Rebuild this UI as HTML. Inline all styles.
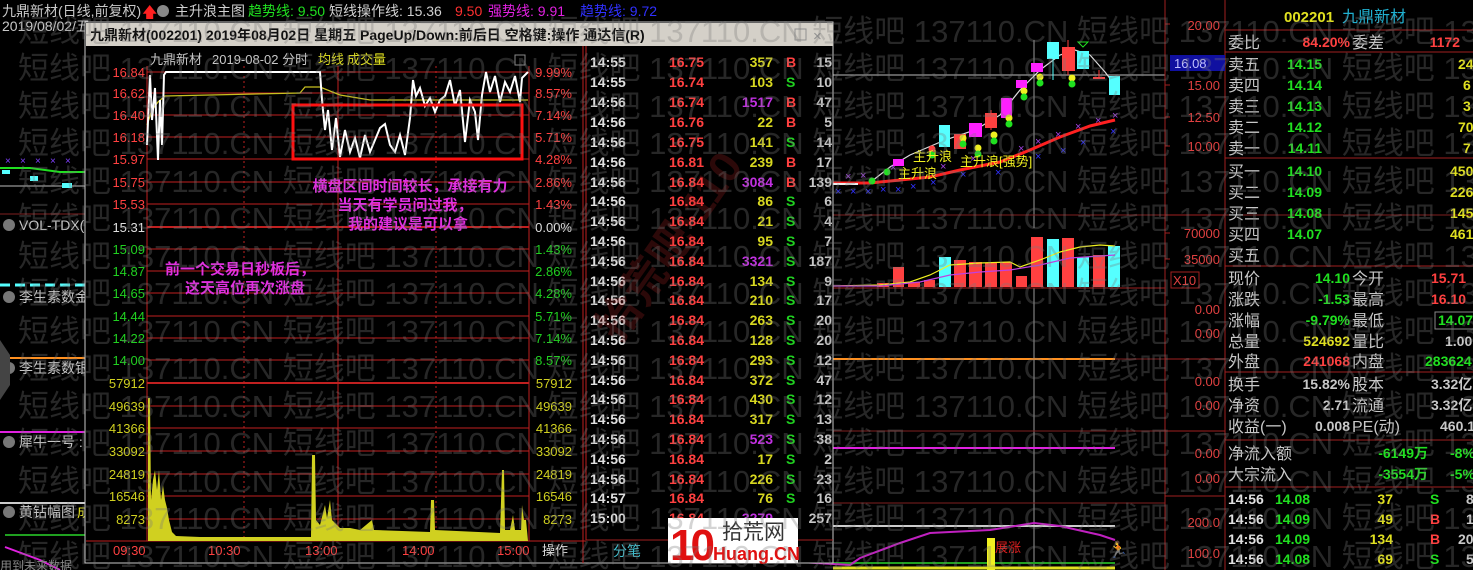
<!DOCTYPE html>
<html><head><meta charset="utf-8"><style>
html,body{margin:0;padding:0;background:#000;width:1473px;height:570px;overflow:hidden}
svg{display:block}
text{font-family:"Liberation Sans","Noto Sans CJK SC",sans-serif}
.t{font-size:14px;font-weight:bold}
.wm{font-size:31px;fill:rgba(120,120,120,0.32)}
</style></head><body>
<svg width="1473" height="570" viewBox="0 0 1473 570" xmlns="http://www.w3.org/2000/svg">
<rect width="1473" height="570" fill="#000"/>

<g font-size="14">
<text x="2" y="16" fill="#c8c8c8">九鼎新材(日线,前复权)</text>
<text x="142" y="17" fill="#ff2020" font-size="15">🡅</text>
<circle cx="163" cy="11" r="6" fill="#888"/>
<text x="175" y="16" fill="#d0d0d0">主升浪主图</text>
<text x="248" y="16" fill="#20e020">趋势线: 9.50</text>
<text x="329" y="16" fill="#d0d0d0">短线操作线: 15.36</text>
<text x="455" y="16" fill="#ff3030">9.50</text>
<text x="488" y="16" fill="#e020e0">强势线: 9.91</text>
<text x="580" y="16" fill="#3030ff">趋势线: 9.72</text>
<text x="2" y="31" fill="#c8c8c8">2019/08/02/五</text>
</g>

<line x1="0" y1="186" x2="85" y2="186" fill="none" stroke="#bbb" stroke-width="1"/>
<polyline points="0,168 30,168 60,172 85,172" fill="none" stroke="#20e020" stroke-width="2"/>
<g fill="#8040ff" font-size="10"><text x="5" y="164">×</text><text x="20" y="164">×</text><text x="35" y="164">×</text><text x="50" y="164">×</text><text x="65" y="164">×</text></g>
<rect x="2" y="170" width="8" height="4" fill="#5ff"/><rect x="30" y="176" width="8" height="5" fill="#5ff"/><rect x="62" y="183" width="10" height="5" fill="#5ff"/>
<line x1="0" y1="214" x2="85" y2="214" stroke="#802020"/>
<line x1="0" y1="285" x2="85" y2="285" stroke="#5ff" stroke-width="3" stroke-dasharray="10,5"/>
<line x1="0" y1="358" x2="85" y2="358" stroke="#ff9020" stroke-width="2"/>
<line x1="0" y1="432" x2="85" y2="432" stroke="#e020e0" stroke-width="2"/>
<line x1="0" y1="503" x2="85" y2="503" stroke="#ccc" stroke-width="2"/>
<line x1="5" y1="535" x2="85" y2="535" stroke="#20a020" stroke-width="2"/>
<polyline points="5,547 40,560 60,570" fill="none" stroke="#e020e0" stroke-width="2"/>
<g font-size="14" fill="#c8c8c8">
<circle cx="9" cy="225" r="6" fill="#777"/><text x="19" y="230">VOL-TDX(5</text>
<circle cx="9" cy="297" r="6" fill="#777"/><text x="19" y="302">李生素数金</text>
<circle cx="9" cy="368" r="6" fill="#777"/><text x="19" y="373">李生素数银</text>
<circle cx="9" cy="442" r="6" fill="#777"/><text x="19" y="447">犀牛一号 :</text>
<circle cx="9" cy="512" r="6" fill="#777"/><text x="19" y="517">黄钻幅图</text><text x="77" y="517" fill="#e0e020">成</text>
<text x="0" y="570" fill="#888" font-size="12">用到未来数据</text>
</g>
<polygon points="0,340 10,355 10,385 0,400" fill="#444"/>

<line x1="833" y1="75" x2="1165" y2="75" stroke="#bbb"/>
<line x1="1034" y1="40" x2="1034" y2="228" stroke="#999"/>
<line x1="1034" y1="288" x2="1034" y2="570" stroke="#999"/>
<line x1="833" y1="215" x2="1473" y2="215" stroke="#802020"/>
<line x1="833" y1="288" x2="1165" y2="288" stroke="#a02020"/>
<line x1="833" y1="359" x2="1115" y2="359" stroke="#ff9020" stroke-width="2"/>
<line x1="1115" y1="359" x2="1165" y2="359" stroke="#802020"/>
<line x1="833" y1="431" x2="1165" y2="431" stroke="#802020"/>
<line x1="833" y1="448" x2="1115" y2="448" stroke="#e020e0" stroke-width="2"/>
<line x1="833" y1="526" x2="1115" y2="526" stroke="#ccc" stroke-width="2"/>
<line x1="833" y1="503" x2="1165" y2="503" stroke="#802020"/>
<line x1="833" y1="563" x2="1115" y2="563" stroke="#20a020" stroke-width="2"/>
<polyline points="800,562 850,565 860,558 900,543 930,533 990,530 1034,523 1060,526 1100,535 1115,540" fill="none" stroke="#c020c0" stroke-width="2"/>
<rect x="987" y="538" width="8" height="32" fill="#f0f020"/>
<text x="995" y="552" fill="#e02020" font-size="13">展涨</text>
<text x="1108" y="555" fill="#ffa020" font-size="16">&#x1F3C3;</text>
<line x1="833" y1="568" x2="1115" y2="568" stroke="#e0e020" stroke-width="3"/>

<polyline points="833,183 870,183 900,180 930,177 960,170 1000,162 1030,150 1060,137 1090,126 1115,120" fill="none" stroke="#ff2020" stroke-width="3"/>
<line x1="833" y1="184" x2="858" y2="184" stroke="#eee" stroke-width="2"/>
<polyline points="872,181 890,167 910,155 945,140 975,130 1000,115 1020,90 1040,70 1060,55 1075,50 1090,55 1105,72 1115,85" fill="none" stroke="#ddd" stroke-width="1.2"/>
<g font-size="11" fill="#a040e0">
<text x="845" y="180">×</text><text x="860" y="179">×</text><text x="890" y="171">×</text><text x="940" y="170">×</text><text x="970" y="162">×</text><text x="1018" y="152">×</text><text x="1035" y="145">×</text><text x="1055" y="138">×</text><text x="1075" y="130">×</text><text x="1095" y="124">×</text><text x="1112" y="119">×</text>
</g>
<g font-size="11" fill="#3030ff">
<text x="835" y="195">×</text><text x="850" y="195">×</text><text x="865" y="195">×</text><text x="880" y="193">×</text><text x="895" y="193">×</text><text x="910" y="190">×</text><text x="930" y="186">×</text><text x="960" y="178">×</text><text x="995" y="176">×</text><text x="1035" y="160">×</text><text x="1060" y="154">×</text><text x="1080" y="146">×</text><text x="1110" y="135">×</text>
</g>
<g>
<rect x="893" y="159" width="11" height="7" fill="#ff20ff"/>
<rect x="939" y="125" width="11" height="22" fill="#55ffff"/>
<rect x="954" y="134" width="12" height="15" fill="#ff4040"/>
<rect x="969" y="123" width="13" height="14" fill="#ff20ff"/>
<line x1="991" y1="110" x2="991" y2="130" stroke="#ff4040"/><rect x="985" y="113" width="12" height="15" fill="#ff4040"/>
<rect x="1001" y="98" width="11" height="20" fill="#ff20ff"/>
<rect x="1016" y="80" width="11" height="8" fill="#ff20ff"/>
<rect x="1031" y="63" width="12" height="9" fill="#ff20ff"/>
<line x1="1053" y1="42" x2="1053" y2="80" stroke="#55ffff"/><rect x="1047" y="42" width="12" height="17" fill="#55ffff"/>
<line x1="1068" y1="40" x2="1068" y2="75" stroke="#ff4040"/><rect x="1062" y="47" width="13" height="24" fill="#ff4040"/>
<rect x="1077" y="51" width="12" height="18" fill="#55ffff"/>
<polygon points="1078,42 1088,42 1083,47" fill="none" stroke="#20e020"/>
<line x1="1099" y1="70" x2="1099" y2="78" stroke="#ff4040"/><rect x="1093" y="77" width="12" height="2" fill="#ff4040"/>
<rect x="1109" y="76" width="11" height="19" fill="#55ffff"/>
</g>
<g>
<circle cx="872" cy="181" r="3.5" fill="#20e020"/><circle cx="887" cy="172" r="3.5" fill="#20e020"/>
<circle cx="932" cy="149" r="3.5" fill="#ff4040"/><circle cx="932" cy="155" r="3.5" fill="#20e020"/>
<circle cx="963" cy="138" r="3.5" fill="#f0f020"/><circle cx="963" cy="144" r="3.5" fill="#20e020"/>
<circle cx="978" cy="148" r="3.5" fill="#f0f020"/><circle cx="978" cy="154" r="3.5" fill="#20e020"/>
<circle cx="994" cy="135" r="3.5" fill="#f0f020"/><circle cx="994" cy="141" r="3.5" fill="#20e020"/>
<circle cx="1009" cy="118" r="3.5" fill="#f0f020"/><circle cx="1009" cy="124" r="3.5" fill="#20e020"/>
<circle cx="1024" cy="91" r="3.5" fill="#f0f020"/><circle cx="1024" cy="97" r="3.5" fill="#20e020"/>
<circle cx="1040" cy="77" r="3.5" fill="#f0f020"/><circle cx="1040" cy="83" r="3.5" fill="#20e020"/>
<circle cx="1072" cy="78" r="3.5" fill="#f0f020"/><circle cx="1072" cy="84" r="3.5" fill="#20e020"/>
</g>
<g font-size="13" fill="#f0f020">
<text x="913" y="161">主升浪</text><text x="898" y="178">主升浪</text><text x="960" y="166">主升浪[强势]</text>
</g>
<g>
<rect x="877" y="283" width="12" height="4" fill="#ff4040"/>
<rect x="893" y="267" width="11" height="20" fill="#ff4040"/>
<rect x="908" y="282" width="12" height="5" fill="#ff4040"/>
<rect x="924" y="280" width="11" height="7" fill="#ff4040"/>
<rect x="939" y="257" width="12" height="30" fill="#55ffff"/>
<rect x="954" y="260" width="12" height="27" fill="#ff4040"/>
<rect x="969" y="262" width="13" height="25" fill="#ff4040"/>
<rect x="985" y="263" width="12" height="24" fill="#ff4040"/>
<rect x="1000" y="262" width="12" height="25" fill="#ff4040"/>
<rect x="1016" y="276" width="11" height="11" fill="#ff4040"/>
<rect x="1031" y="237" width="12" height="50" fill="#ff4040"/>
<rect x="1047" y="239" width="12" height="48" fill="#55ffff"/>
<rect x="1062" y="238" width="12" height="49" fill="#ff4040"/>
<rect x="1077" y="257" width="12" height="30" fill="#55ffff"/>
<rect x="1093" y="255" width="12" height="32" fill="#ff4040"/>
<rect x="1108" y="246" width="12" height="41" fill="#55ffff"/>
<polyline points="833,286 880,285 910,282 930,275 950,265 980,263 1010,262 1020,267 1040,260 1060,252 1080,247 1100,245 1115,246" fill="none" stroke="#f0f020" stroke-width="1.2"/>
<polyline points="833,286 880,286 920,282 950,275 980,272 1010,270 1040,265 1070,258 1100,256 1115,255" fill="none" stroke="#c040e0" stroke-width="1.2"/>
</g>

<line x1="1165" y1="0" x2="1165" y2="570" stroke="#a02020"/>
<line x1="1225" y1="0" x2="1225" y2="570" stroke="#a02020"/>
<g font-size="13" fill="#e04040" text-anchor="end">
<text x="1220" y="30">20.00</text><text x="1220" y="90">15.00</text><text x="1220" y="122">12.50</text><text x="1220" y="151">10.00</text>
<text x="1220" y="238">70000</text><text x="1220" y="264">35000</text>
<text x="1220" y="314">0.00</text><text x="1220" y="338">0.00</text><text x="1220" y="386">0.00</text><text x="1220" y="410">0.00</text><text x="1220" y="458">0.00</text><text x="1220" y="483">0.00</text><text x="1220" y="527">200.0</text><text x="1220" y="558">100.0</text>
</g>
<g stroke="#a02020"><line x1="1165" y1="24" x2="1170" y2="24"/><line x1="1165" y1="85" x2="1170" y2="85"/><line x1="1165" y1="117" x2="1170" y2="117"/><line x1="1165" y1="146" x2="1170" y2="146"/><line x1="1165" y1="233" x2="1170" y2="233"/><line x1="1165" y1="259" x2="1170" y2="259"/><line x1="1165" y1="359" x2="1225" y2="359"/><line x1="1165" y1="431" x2="1225" y2="431"/><line x1="1165" y1="496" x2="1225" y2="496"/><line x1="1165" y1="215" x2="1225" y2="215"/></g>
<rect x="1170" y="55" width="55" height="16" fill="#1010a0"/>
<text x="1174" y="68" font-size="13" fill="#c0c0ff">16.08</text>
<rect x="1171" y="272" width="28" height="16" fill="none" stroke="#a02020"/>
<text x="1173" y="285" font-size="13" fill="#e04040">X10</text>

<g stroke="#a02020"><line x1="1225" y1="30" x2="1473" y2="30"/><line x1="1225" y1="52" x2="1473" y2="52"/><line x1="1225" y1="158" x2="1473" y2="158"/><line x1="1225" y1="266" x2="1473" y2="266"/><line x1="1225" y1="372" x2="1473" y2="372"/><line x1="1225" y1="440" x2="1473" y2="440"/><line x1="1225" y1="487" x2="1473" y2="487"/></g>
<text x="1284" y="22" font-size="15" font-weight="bold" fill="#e0e020">002201</text>
<text x="1342" y="22" font-size="16" fill="#20b0d0">九鼎新材</text>
<g font-size="16" fill="#c8c8c8">
<text x="1228" y="48">委比</text><text x="1352" y="48">委差</text>
<text x="1228" y="70">卖五</text><text x="1228" y="91">卖四</text><text x="1228" y="112">卖三</text><text x="1228" y="133">卖二</text><text x="1228" y="154">卖一</text>
<text x="1228" y="177">买一</text><text x="1228" y="198">买二</text><text x="1228" y="219">买三</text><text x="1228" y="240">买四</text><text x="1228" y="261">买五</text>
<text x="1228" y="284">现价</text><text x="1352" y="284">今开</text>
<text x="1228" y="305">涨跌</text><text x="1352" y="305">最高</text>
<text x="1228" y="326">涨幅</text><text x="1352" y="326">最低</text>
<text x="1228" y="347">总量</text><text x="1352" y="347">量比</text>
<text x="1228" y="367">外盘</text><text x="1352" y="367">内盘</text>
<text x="1228" y="390">换手</text><text x="1352" y="390">股本</text>
<text x="1228" y="411">净资</text><text x="1352" y="411">流通</text>
<text x="1228" y="432">收益(一)</text><text x="1352" y="432">PE(动)</text>
<text x="1228" y="459">净流入额</text><text x="1228" y="480">大宗流入</text>
</g>
<g class="t" text-anchor="end">
<text x="1350" y="47" fill="#ff4040">84.20%</text><text x="1460" y="47" fill="#ff4040">1172</text>
<text x="1322" y="69" fill="#20e020">14.15</text><text x="1322" y="90" fill="#20e020">14.14</text><text x="1322" y="111" fill="#20e020">14.13</text><text x="1322" y="132" fill="#20e020">14.12</text><text x="1322" y="153" fill="#20e020">14.11</text>
<text x="1322" y="176" fill="#20e020">14.10</text><text x="1322" y="197" fill="#20e020">14.09</text><text x="1322" y="218" fill="#20e020">14.08</text><text x="1322" y="239" fill="#20e020">14.07</text>
<text x="1350" y="283" fill="#20e020">14.10</text>
<text x="1350" y="304" fill="#20e020">-1.53</text>
<text x="1350" y="325" fill="#20e020">-9.79%</text>
<text x="1350" y="346" fill="#e0e020">524692</text>
<text x="1350" y="366" fill="#ff4040">241068</text>
<text x="1350" y="389" fill="#c8c8c8">15.82%</text>
<text x="1350" y="410" fill="#c8c8c8">2.71</text>
<text x="1350" y="431" fill="#c8c8c8">0.008</text>
<text x="1428" y="458" fill="#20e020">-6149万</text><text x="1428" y="479" fill="#20e020">-3554万</text>
</g>
<g class="t" fill="#e0e020">
<text x="1458" y="69">24</text><text x="1463" y="90">6</text><text x="1463" y="111">3</text><text x="1458" y="132">70</text><text x="1463" y="153">7</text>
<text x="1450" y="176">450</text><text x="1450" y="197">226</text><text x="1450" y="218">145</text><text x="1450" y="239">461</text>
</g>
<g class="t">
<text x="1431" y="283" fill="#ff4040">15.71</text>
<text x="1431" y="304" fill="#ff4040">16.10</text>
<rect x="1435" y="312" width="40" height="17" fill="none" stroke="#888"/>
<text x="1438" y="325" fill="#20e020">14.07</text>
<text x="1445" y="346" fill="#c8c8c8">1.00</text>
<text x="1425" y="366" fill="#20e020">283624</text>
<text x="1431" y="389" fill="#c8c8c8">3.32亿</text>
<text x="1431" y="410" fill="#c8c8c8">3.32亿</text>
<text x="1440" y="431" fill="#c8c8c8">460.1</text>
<text x="1450" y="458" fill="#20e020">-8%</text><text x="1450" y="479" fill="#20e020">-5%</text>
</g>
<g class="t">
<text x="1228" y="504" fill="#e0e0e0">14:56</text><text x="1275" y="504" fill="#20e020">14.08</text><text x="1393" y="504" fill="#e0e020" text-anchor="end">37</text><text x="1430" y="504" fill="#20e020">S</text><text x="1466" y="504" fill="#c8c8c8">8</text>
<text x="1228" y="524" fill="#e0e0e0">14:56</text><text x="1275" y="524" fill="#20e020">14.09</text><text x="1393" y="524" fill="#e0e020" text-anchor="end">49</text><text x="1430" y="524" fill="#ff4040">B</text><text x="1466" y="524" fill="#c8c8c8">1</text>
<text x="1228" y="544" fill="#e0e0e0">14:56</text><text x="1275" y="544" fill="#20e020">14.09</text><text x="1393" y="544" fill="#e0e020" text-anchor="end">134</text><text x="1430" y="544" fill="#ff4040">B</text><text x="1458" y="544" fill="#c8c8c8">20</text>
<text x="1228" y="564" fill="#e0e0e0">14:56</text><text x="1275" y="564" fill="#20e020">14.08</text><text x="1393" y="564" fill="#e0e020" text-anchor="end">69</text><text x="1430" y="564" fill="#20e020">S</text><text x="1466" y="564" fill="#c8c8c8">5</text>
</g>

<rect x="85" y="22" width="748" height="541" fill="#000" stroke="#c8c8c8"/>
<rect x="86" y="23" width="747" height="23" fill="#d4d0c8"/>
<text x="90" y="40" font-size="14" font-weight="bold" fill="#101010">九鼎新材(002201) 2019年08月02日 星期五 PageUp/Down:前后日 空格键:操作 通达信(R)</text>
<rect x="795" y="29" width="11" height="11" fill="none" stroke="#909090"/>
<text x="813" y="41" font-size="15" fill="#909090">×</text>

<g font-size="13">
<text x="150" y="64" fill="#c8c8c8">九鼎新材</text>
<text x="212" y="64" fill="#c8c8c8">2019-08-02 分时</text>
<text x="318" y="64" fill="#e0e020">均线</text>
<text x="347" y="64" fill="#e0e020">成交量</text>
</g>
<rect x="515" y="55" width="10" height="10" fill="none" stroke="#888"/>

<g stroke="#c02020" stroke-width="1">
<line x1="147" y1="72" x2="529" y2="72"/><line x1="147" y1="93" x2="529" y2="93"/><line x1="147" y1="115" x2="529" y2="115"/><line x1="147" y1="137" x2="529" y2="137"/><line x1="147" y1="159" x2="529" y2="159"/><line x1="147" y1="182" x2="529" y2="182"/><line x1="147" y1="204" x2="529" y2="204"/>
<line x1="147" y1="227" x2="529" y2="227" stroke-width="2"/>
<line x1="147" y1="249" x2="529" y2="249"/><line x1="147" y1="271" x2="529" y2="271"/><line x1="147" y1="293" x2="529" y2="293"/><line x1="147" y1="316" x2="529" y2="316"/><line x1="147" y1="338" x2="529" y2="338"/><line x1="147" y1="360" x2="529" y2="360"/>
<line x1="147" y1="383" x2="529" y2="383" stroke-width="2"/>
<line x1="147" y1="406" x2="529" y2="406"/><line x1="147" y1="428" x2="529" y2="428"/><line x1="147" y1="451" x2="529" y2="451"/><line x1="147" y1="474" x2="529" y2="474"/><line x1="147" y1="496" x2="529" y2="496"/><line x1="147" y1="519" x2="529" y2="519"/>
<line x1="147" y1="541" x2="529" y2="541"/>
<line x1="147" y1="66" x2="147" y2="541"/><line x1="529" y1="66" x2="529" y2="541"/><line x1="338" y1="66" x2="338" y2="541"/>
<line x1="244" y1="66" x2="244" y2="541" stroke-dasharray="2,3"/><line x1="436" y1="66" x2="436" y2="541" stroke-dasharray="2,3"/>
<line x1="583" y1="46" x2="583" y2="563"/><line x1="586" y1="46" x2="586" y2="540"/>
<line x1="86" y1="541" x2="586" y2="541"/>
</g>
<g font-size="13" text-anchor="end">
<g fill="#ff4040"><text x="145" y="77">16.84</text><text x="145" y="98">16.62</text><text x="145" y="120">16.40</text><text x="145" y="142">16.18</text><text x="145" y="164">15.97</text><text x="145" y="187">15.75</text><text x="145" y="209">15.53</text></g>
<text x="145" y="232" fill="#e0e0e0">15.31</text>
<g fill="#20d020"><text x="145" y="254">15.09</text><text x="145" y="276">14.87</text><text x="145" y="298">14.65</text><text x="145" y="321">14.44</text><text x="145" y="343">14.22</text><text x="145" y="365">14.00</text></g>
<g fill="#d0d020"><text x="145" y="388">57912</text><text x="145" y="411">49639</text><text x="145" y="433">41366</text><text x="145" y="456">33092</text><text x="145" y="479">24819</text><text x="145" y="501">16546</text><text x="145" y="524">8273</text></g>
</g>
<g font-size="13" text-anchor="end">
<g fill="#ff4040"><text x="572" y="77">9.99%</text><text x="572" y="98">8.57%</text><text x="572" y="120">7.14%</text><text x="572" y="142">5.71%</text><text x="572" y="164">4.28%</text><text x="572" y="187">2.86%</text><text x="572" y="209">1.43%</text></g>
<text x="572" y="232" fill="#e0e0e0">0.00%</text>
<g fill="#20d020"><text x="572" y="254">1.43%</text><text x="572" y="276">2.86%</text><text x="572" y="298">4.28%</text><text x="572" y="321">5.71%</text><text x="572" y="343">7.14%</text><text x="572" y="365">8.57%</text></g>
<g fill="#d0d020"><text x="572" y="388">57912</text><text x="572" y="411">49639</text><text x="572" y="433">41366</text><text x="572" y="456">33092</text><text x="572" y="479">24819</text><text x="572" y="501">16546</text><text x="572" y="524">8273</text></g>
</g>
<g font-size="13" fill="#ff4040">
<text x="113" y="555">09:30</text><text x="208" y="555">10:30</text><text x="305" y="555">13:00</text><text x="402" y="555">14:00</text><text x="497" y="555">15:00</text>
</g>
<text x="542" y="555" font-size="13" fill="#e0e0e0">操作</text>

<polyline points="147,125 152,110 158,102 165,96 300,93 305,87 320,87 340,95 370,100 528,100" fill="none" stroke="#c8c020" stroke-width="1.3"/>
<polyline points="147,145 150,75 152,120 155,88 158,160 160,100 162,145 164,75 166,72 320,72 322,100 325,130 328,110 332,150 336,118 340,157 345,130 350,152 355,138 360,158 365,135 370,152 375,140 380,128 385,124 390,145 395,152 400,135 405,155 410,118 413,80 416,96 420,88 425,106 430,98 435,112 440,100 445,96 450,80 455,106 460,90 465,142 470,100 475,112 478,140 482,95 486,72 490,92 495,76 500,102 505,82 510,92 515,76 520,102 522,78 528,72" fill="none" stroke="#fff" stroke-width="2"/>
<rect x="293" y="105" width="229" height="54" fill="none" stroke="#ff1010" stroke-width="3"/>

<polygon points="148,541 148,398 150,398 151,500 153,480 155,470 157,490 159,470 161,500 163,485 165,500 167,508 169,520 172,532 176,536 200,537 300,537 311,537 312,455 315,455 316,520 320,525 325,505 327,518 330,500 332,520 340,528 350,528 360,530 372,520 374,530 430,532 431,500 434,500 435,530 500,533 502,470 504,470 505,530 510,530 513,515 515,530 521,530 522,505 524,520 526,520 528,541" fill="#d0d020"/>

<g font-size="15" font-weight="bold" fill="#e030e0" text-anchor="middle">
<text x="410" y="191">横盘区间时间较长，承接有力</text>
<text x="405" y="210">当天有学员问过我，</text>
<text x="408" y="229">我的建议是可以拿</text>
<text x="240" y="274">前一个交易日秒板后，</text>
<text x="245" y="293">这天高位再次涨盘</text>
</g>

<g class="t">
<g fill="#e0e0e0">
<text x="590" y="67">14:55</text><text x="590" y="87">14:55</text><text x="590" y="107">14:56</text><text x="590" y="127">14:56</text><text x="590" y="147">14:56</text><text x="590" y="167">14:56</text><text x="590" y="187">14:56</text><text x="590" y="206">14:56</text><text x="590" y="226">14:56</text><text x="590" y="246">14:56</text><text x="590" y="266">14:56</text><text x="590" y="286">14:56</text><text x="590" y="305">14:56</text><text x="590" y="325">14:56</text><text x="590" y="345">14:56</text><text x="590" y="365">14:56</text><text x="590" y="385">14:56</text><text x="590" y="404">14:56</text><text x="590" y="424">14:56</text><text x="590" y="444">14:56</text><text x="590" y="464">14:56</text><text x="590" y="484">14:56</text><text x="590" y="503">14:57</text><text x="590" y="523">15:00</text>
</g>
<g fill="#ff4040" text-anchor="end">
<text x="704" y="67">16.75</text><text x="704" y="87">16.74</text><text x="704" y="107">16.74</text><text x="704" y="127">16.76</text><text x="704" y="147">16.75</text><text x="704" y="167">16.81</text><text x="704" y="187">16.84</text><text x="704" y="206">16.84</text><text x="704" y="226">16.84</text><text x="704" y="246">16.84</text><text x="704" y="266">16.84</text><text x="704" y="286">16.84</text><text x="704" y="305">16.84</text><text x="704" y="325">16.84</text><text x="704" y="345">16.84</text><text x="704" y="365">16.84</text><text x="704" y="385">16.84</text><text x="704" y="404">16.84</text><text x="704" y="424">16.84</text><text x="704" y="444">16.84</text><text x="704" y="464">16.84</text><text x="704" y="484">16.84</text><text x="704" y="503">16.84</text><text x="704" y="523">16.84</text>
</g>
<g fill="#d8d820" text-anchor="end">
<text x="773" y="67">357</text><text x="773" y="87">103</text><text x="773" y="107" fill="#c030e0">1517</text><text x="773" y="127">22</text><text x="773" y="147">141</text><text x="773" y="167">239</text><text x="773" y="187" fill="#c030e0">3084</text><text x="773" y="206">86</text><text x="773" y="226">21</text><text x="773" y="246">95</text><text x="773" y="266" fill="#c030e0">3321</text><text x="773" y="286">134</text><text x="773" y="305">210</text><text x="773" y="325">263</text><text x="773" y="345">128</text><text x="773" y="365">293</text><text x="773" y="385">372</text><text x="773" y="404">430</text><text x="773" y="424">317</text><text x="773" y="444" fill="#c030e0">523</text><text x="773" y="464">17</text><text x="773" y="484">226</text><text x="773" y="503">76</text><text x="773" y="523" fill="#c030e0">3279</text>
</g>
<g fill="#20d020">
<text x="786" y="67" fill="#ff4040">B</text><text x="786" y="87">S</text><text x="786" y="107" fill="#ff4040">B</text><text x="786" y="127" fill="#ff4040">B</text><text x="786" y="147">S</text><text x="786" y="167" fill="#ff4040">B</text><text x="786" y="187" fill="#ff4040">B</text><text x="786" y="206">S</text><text x="786" y="226">S</text><text x="786" y="246">S</text><text x="786" y="266">S</text><text x="786" y="286">S</text><text x="786" y="305">S</text><text x="786" y="325">S</text><text x="786" y="345">S</text><text x="786" y="365">S</text><text x="786" y="385">S</text><text x="786" y="404">S</text><text x="786" y="424">S</text><text x="786" y="444">S</text><text x="786" y="464">S</text><text x="786" y="484">S</text><text x="786" y="503">S</text>
</g>
<g fill="#c8c8c8" text-anchor="end">
<text x="832" y="67">15</text><text x="832" y="87">10</text><text x="832" y="107">47</text><text x="832" y="127">5</text><text x="832" y="147">14</text><text x="832" y="167">17</text><text x="832" y="187">139</text><text x="832" y="206">6</text><text x="832" y="226">4</text><text x="832" y="246">7</text><text x="832" y="266">187</text><text x="832" y="286">9</text><text x="832" y="305">17</text><text x="832" y="325">20</text><text x="832" y="345">20</text><text x="832" y="365">12</text><text x="832" y="385">47</text><text x="832" y="404">12</text><text x="832" y="424">13</text><text x="832" y="444">38</text><text x="832" y="464">2</text><text x="832" y="484">23</text><text x="832" y="503">16</text><text x="832" y="523">257</text>
</g>
</g>
<line x1="586" y1="540" x2="833" y2="540" stroke="#a02020"/>
<line x1="669" y1="540" x2="669" y2="563" stroke="#a02020"/>
<text x="613" y="556" font-size="14" fill="#40c0d0">分笔</text>

<g font-size="44" font-weight="bold" fill="rgba(200,40,40,0.22)" transform="rotate(-55 680 240)">
<text x="560" y="250">拾荒吧·110</text>
</g>

<rect x="668" y="518" width="130" height="45" fill="#fff"/>
<text x="670" y="560" font-size="44" font-weight="bold" fill="#e01010" letter-spacing="-4">10</text>
<text x="722" y="539" font-size="21" fill="#333">拾荒网</text>
<text x="713" y="560" font-size="18" font-weight="bold" fill="#e01010">Huang.CN</text>

<g class="wm">
<text x="18" y="42">短线吧 137110.CN 短线吧 137110.CN 短线吧 137110.CN 短线吧 137110.CN 短线吧 137110.CN 短线吧 137110.CN</text>
<text x="18" y="79">短线吧 137110.CN 短线吧 137110.CN 短线吧 137110.CN 短线吧 137110.CN 短线吧 137110.CN 短线吧 137110.CN</text>
<text x="18" y="117">短线吧 137110.CN 短线吧 137110.CN 短线吧 137110.CN 短线吧 137110.CN 短线吧 137110.CN 短线吧 137110.CN</text>
<text x="18" y="154">短线吧 137110.CN 短线吧 137110.CN 短线吧 137110.CN 短线吧 137110.CN 短线吧 137110.CN 短线吧 137110.CN</text>
<text x="18" y="192">短线吧 137110.CN 短线吧 137110.CN 短线吧 137110.CN 短线吧 137110.CN 短线吧 137110.CN 短线吧 137110.CN</text>
<text x="18" y="229">短线吧 137110.CN 短线吧 137110.CN 短线吧 137110.CN 短线吧 137110.CN 短线吧 137110.CN 短线吧 137110.CN</text>
<text x="18" y="267">短线吧 137110.CN 短线吧 137110.CN 短线吧 137110.CN 短线吧 137110.CN 短线吧 137110.CN 短线吧 137110.CN</text>
<text x="18" y="304">短线吧 137110.CN 短线吧 137110.CN 短线吧 137110.CN 短线吧 137110.CN 短线吧 137110.CN 短线吧 137110.CN</text>
<text x="18" y="342">短线吧 137110.CN 短线吧 137110.CN 短线吧 137110.CN 短线吧 137110.CN 短线吧 137110.CN 短线吧 137110.CN</text>
<text x="18" y="379">短线吧 137110.CN 短线吧 137110.CN 短线吧 137110.CN 短线吧 137110.CN 短线吧 137110.CN 短线吧 137110.CN</text>
<text x="18" y="417">短线吧 137110.CN 短线吧 137110.CN 短线吧 137110.CN 短线吧 137110.CN 短线吧 137110.CN 短线吧 137110.CN</text>
<text x="18" y="454">短线吧 137110.CN 短线吧 137110.CN 短线吧 137110.CN 短线吧 137110.CN 短线吧 137110.CN 短线吧 137110.CN</text>
<text x="18" y="492">短线吧 137110.CN 短线吧 137110.CN 短线吧 137110.CN 短线吧 137110.CN 短线吧 137110.CN 短线吧 137110.CN</text>
<text x="18" y="529">短线吧 137110.CN 短线吧 137110.CN 短线吧 137110.CN 短线吧 137110.CN 短线吧 137110.CN 短线吧 137110.CN</text>
<text x="18" y="567">短线吧 137110.CN 短线吧 137110.CN 短线吧 137110.CN 短线吧 137110.CN 短线吧 137110.CN 短线吧 137110.CN</text>
</g>
</svg>
</body></html>
